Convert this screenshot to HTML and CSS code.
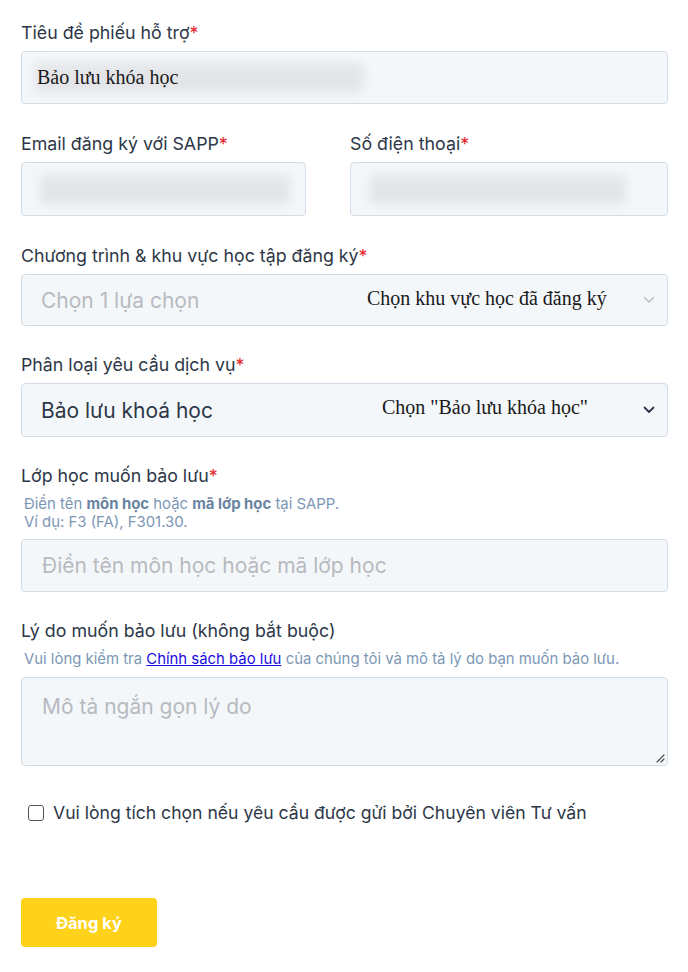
FILE: index.html
```html
<!DOCTYPE html>
<html lang="vi">
<head>
<meta charset="utf-8">
<title>Bảo lưu khóa học</title>
<link rel="stylesheet" href="styles.css">
</head>
<body>
<form class="form">
  <div class="field">
    <div class="label">Tiêu đề phiếu hỗ trợ<span class="req">*</span></div>
    <div class="box input i1">
      <span class="blur blur-title"></span>
      <span class="serif">Bảo lưu khóa học</span>
    </div>
  </div>

  <div class="row">
    <div class="field col-left">
      <div class="label">Email đăng ký với SAPP<span class="req">*</span></div>
      <div class="box input tall"><span class="blur blur-email"></span></div>
    </div>
    <div class="field col-right">
      <div class="label">Số điện thoại<span class="req">*</span></div>
      <div class="box input tall"><span class="blur blur-phone"></span></div>
    </div>
  </div>

  <div class="field">
    <div class="label">Chương trình &amp; khu vực học tập đăng ký<span class="req">*</span></div>
    <div class="box select s1">
      <span class="placeholder">Chọn 1 lựa chọn</span>
      <span class="serif note-a">Chọn khu vực học đã đăng ký</span>
      <svg class="chev light" viewBox="0 0 12 8" width="12" height="8"><path d="M1.5 1.5 L6 6 L10.5 1.5" fill="none" stroke="currentColor" stroke-width="1.4" stroke-linecap="round" stroke-linejoin="round"/></svg>
    </div>
  </div>

  <div class="field">
    <div class="label">Phân loại yêu cầu dịch vụ<span class="req">*</span></div>
    <div class="box select s2">
      <span class="value">Bảo lưu khoá học</span>
      <span class="serif note-b">Chọn "Bảo lưu khóa học"</span>
      <svg class="chev dark" viewBox="0 0 12 8" width="12" height="8"><path d="M1.5 1.5 L6 6 L10.5 1.5" fill="none" stroke="currentColor" stroke-width="1.8" stroke-linecap="round" stroke-linejoin="round"/></svg>
    </div>
  </div>

  <div class="field">
    <div class="label">Lớp học muốn bảo lưu<span class="req">*</span></div>
    <div class="help help-2">Điền tên <b>môn học</b> hoặc <b>mã lớp học</b> tại SAPP.<br>Ví dụ: F3 (FA), F301.30.</div>
    <div class="box input s3"><span class="placeholder">Điền tên môn học hoặc mã lớp học</span></div>
  </div>

  <div class="field">
    <div class="label">Lý do muốn bảo lưu (không bắt buộc)</div>
    <div class="help help-1">Vui lòng kiểm tra <a href="#" class="link">Chính sách bảo lưu</a> của chúng tôi và mô tả lý do bạn muốn bảo lưu.</div>
    <div class="box textarea">
      <span class="placeholder">Mô tả ngắn gọn lý do</span>
      <svg class="grip" viewBox="0 0 10 10" width="10" height="10"><path d="M9 2 L2 9 M9 6 L6 9" stroke="#444" stroke-width="1.1" fill="none" stroke-linecap="round"/></svg>
    </div>
  </div>

  <label class="check">
    <span class="checkbox"></span>
    <span class="check-text">Vui lòng tích chọn nếu yêu cầu được gửi bởi Chuyên viên Tư vấn</span>
  </label>

  <button type="button" class="submit">Đăng ký</button>
</form>
</body>
</html>
```

FILE: styles.css
```css
* { box-sizing: border-box; }
html, body { margin: 0; padding: 0; background: #ffffff; }
body {
  font-family: Inter, "Noto Sans", sans-serif;
  color: #2d3748;
}
.form {
  padding: 22px 20px 0 21px;
  display: flex;
  flex-direction: column;
}
.field { display: flex; flex-direction: column; margin-bottom: 28px; }
.field:first-child { margin-bottom: 29px; }
.label {
  font-size: 17.8px;
  line-height: 21px;
  color: #2d3748;
  margin-bottom: 8px;
}
.req { color: #e3262b; }
.row { display: flex; gap: 44px; }
.col-left { width: 285px; }
.col-right { flex: 1; }
.box {
  position: relative;
  background: #f4f7fa;
  border: 1px solid #d3dce7;
  border-radius: 4px;
  display: flex;
  align-items: center;
}
.input { height: 53px; padding-left: 16px; }
.i1 { padding-left: 15px; }
.input.tall { height: 54px; }
.s1 { height: 52px; }
.s2 { height: 54px; }
.s3 { height: 53px; padding-left: 20px; }
.select { padding-left: 19px; padding-right: 8px; }
.serif {
  position: relative;
  font-family: "Liberation Serif", "Times New Roman", serif;
  font-size: 20px;
  color: #1a1a1a;
}
.blur {
  position: absolute;
  background: #e3e5e8;
  filter: blur(5px);
  border-radius: 6px;
}
.blur-title { left: 12px; top: 11px; width: 330px; height: 30px; }
.blur-email { left: 18px; top: 12px; width: 250px; height: 30px; }
.blur-phone { left: 18px; top: 12px; width: 257px; height: 30px; }
.placeholder { color: #b7babf; font-size: 21px; }
.value { color: #2d3748; font-size: 21px; }
.note-a { position: absolute; left: 345px; top: 12px; }
.note-b { position: absolute; left: 360px; top: 12px; }
.chev { margin-left: auto; margin-right: 4px; }
.chev.light { color: #b9bdc3; }
.chev.dark { color: #2d3748; }
.help {
  font-size: 14.9px;
  line-height: 18px;
  color: #7c97b5;
  padding-left: 3px;
}
.help b { color: #6a83a0; font-weight: 700; }
.help-2 { margin-top: 1px; margin-bottom: 8px; }
.help-1 { margin-top: 1px; margin-bottom: 9px; }
.link { color: #1a0dde; text-decoration: underline; }
.textarea {
  height: 89px;
  align-items: flex-start;
  padding: 16px 20px;
}
.grip { position: absolute; right: 2px; bottom: 2px; }
.check {
  display: flex;
  align-items: center;
  gap: 9px;
  margin-top: 8px;
  padding-left: 7px;
}
.checkbox {
  width: 16px;
  height: 16px;
  border: 1.5px solid #555;
  border-radius: 3px;
  background: #fff;
  flex: none;
}
.check-text { font-size: 17.6px; line-height: 21px; color: #2d3748; }
.submit {
  margin-top: 75px;
  width: 136px;
  height: 49px;
  border: none;
  border-radius: 4px;
  background: #fed21a;
  color: #ffffff;
  font-family: Inter, "Noto Sans", sans-serif;
  font-size: 16.5px;
  font-weight: 700;
  align-self: flex-start;
}
```
